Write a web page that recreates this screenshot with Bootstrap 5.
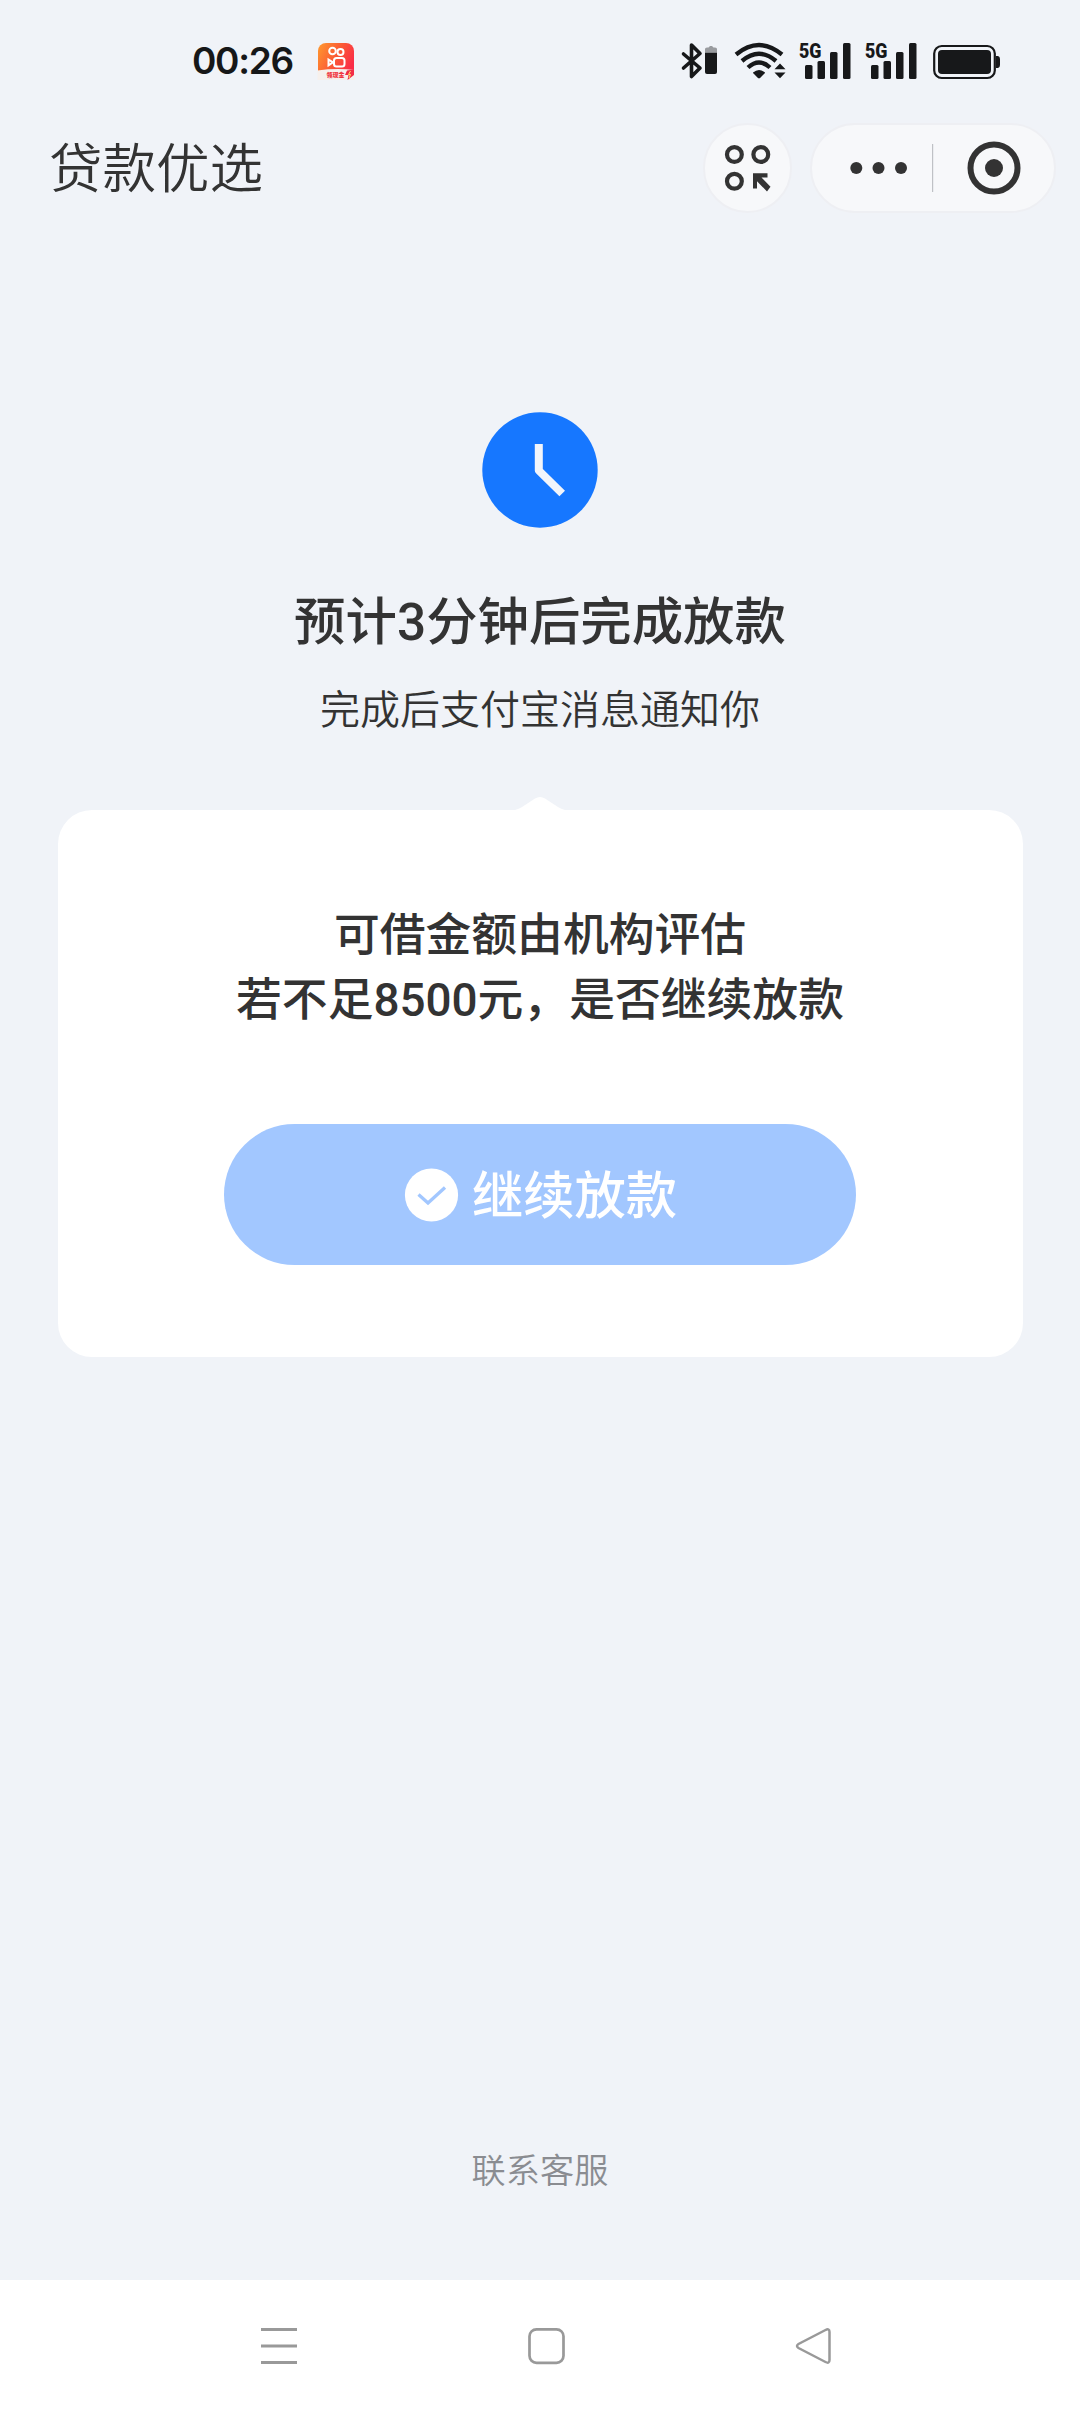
<!DOCTYPE html>
<html lang="zh-CN">
<head>
<meta charset="utf-8">
<meta name="viewport" content="width=device-width, initial-scale=1">
<title>贷款优选</title>
<link rel="stylesheet" href="https://cdn.jsdelivr.net/npm/bootstrap@5.3.0/dist/css/bootstrap.min.css">
<style>
body{background:#f0f3f8;color:#333;font-family:"Noto Sans CJK SC",sans-serif}
.screen{height:2412px;width:1080px;overflow:hidden}
svg{display:block;flex:none;overflow:visible}
.statusbar{height:123px;padding:42px 78px 0 192px}
.clock-time{font:600 37px/38px Inter,sans-serif;color:#161718;width:125px;letter-spacing:-1.3px}
.topbar{height:90px;padding:0 24px 0 49px}
.topbar h1{font-size:53.5px;line-height:80px;font-weight:350;margin:0;padding-bottom:6px}
.pill{background:#f7f8fa;border:2px solid #eeeff3;height:90px}
.pill-scan{width:89px;margin-right:18px}
.pill-menu{width:246px}
.pill-menu svg{margin-left:1px}
.num{font-family:Roboto,sans-serif;line-height:1}
.hero{padding-top:199px}
.hero h2{font-size:51.4px;line-height:70px;font-weight:500;margin:55px 0 0}
.hero p{font-size:40px;line-height:56px;font-weight:350;margin:26px 0 0}
.panel{width:965px;height:547px;border-radius:34px;padding-top:89px}
.panel p{font-size:45.8px;line-height:65px;font-weight:500;margin:0}
.go{width:632px;height:141px;margin-top:95px;background:#a2c7ff;color:#fff;font-size:51.3px;font-weight:500;line-height:70px;gap:14px;padding:0 0 0 1px}
.go span{padding-bottom:5px}
.support{font-size:34.2px;line-height:48px;font-weight:350;color:#8a8c91;margin-bottom:88px}
.softkeys{height:132px;padding:0 248px 0 260px}
.tip{margin-top:61px}
</style>
<script src="https://cdn.jsdelivr.net/npm/bootstrap@5.3.0/dist/js/bootstrap.bundle.min.js"></script>
</head>
<body>
<div class="screen d-flex flex-column">
  <header>
    <div class="statusbar d-flex align-items-start">
      <div class="clock-time">00:26</div>
      <svg width="38" height="38" viewBox="317 43 38 38">
        <defs><linearGradient id="kw" x1="0" y1="0" x2="1" y2=".5"><stop offset="0" stop-color="#ff9a2e"/><stop offset=".55" stop-color="#fb5a35"/><stop offset="1" stop-color="#fa2c48"/></linearGradient></defs>
        <rect x="318" y="44" width="36" height="36" rx="8" fill="url(#kw)"/>
        <path d="M317.500 71.500Q336 69 354.500 71V81H317.500Z" fill="#f6f0ec"/>
        <g fill="none" stroke="#fff" stroke-width="2"><circle cx="332.500" cy="52" r="3.300"/><circle cx="340.500" cy="53" r="3"/><rect x="334" y="59" width="10.500" height="8.500" rx="2.500"/><path d="M328.500 60.500L333 63.300L328.500 66.300Z"/></g>
        <text x="326.500" y="78" font-size="6" font-weight="900" fill="#f0323c" font-family="Noto Sans CJK SC">领现金</text>
        <path d="M347 71.500L354 70.500V76L347.500 81L348.500 76H345Z" fill="#f22c45"/><path d="M350.500 72L348.500 75.500H350.500L349 79" stroke="#ffe36a" fill="none"/>
      </svg>
      <svg class="ms-auto" width="322" height="38" viewBox="680 42 322 38" fill="#17181a">
        <path d="M683.500 54L700 68L691.500 76.500V45L700 53.500L683.500 68" fill="none" stroke="#17181a" stroke-width="3.600" stroke-linejoin="round" stroke-linecap="round"/>
        <path d="M705 52.500H717V72Q717 74 715 74H707Q705 74 705 72Z"/><path d="M705 52V49Q705 47.500 707 47.500H708.500L710 46H712L713.500 47.500H715Q717 47.500 717 49V52Z" fill="#999b9f"/>
        <g fill="none" stroke="#17181a" stroke-width="4.300"><path d="M736 54.500Q759 35.500 782 54.500"/><path d="M742 61Q759 46.500 776 61"/><path d="M748 67.500Q759 57.500 770 67.500"/></g>
        <path d="M753 72.500Q759 67.500 765 72.500V73L759.800 78.300H758.200L753 73Z"/>
        <path d="M774.500 69.300L780 63.500L785.500 69.300ZM774.500 72.500L780 78.300L785.500 72.500Z"/>
        <g><text x="799" y="57.500" font-family="Roboto" font-weight="900" font-size="21" textLength="22.500" lengthAdjust="spacingAndGlyphs">5G</text>
        <rect x="805" y="65" width="7.500" height="14" rx="1.500"/><rect x="817.500" y="61" width="7.500" height="18" rx="1.500"/><rect x="830" y="52" width="7.500" height="27" rx="1.500"/><rect x="843" y="43" width="7.500" height="36" rx="1.500"/></g>
        <g><text x="865" y="57.500" font-family="Roboto" font-weight="900" font-size="21" textLength="22.500" lengthAdjust="spacingAndGlyphs">5G</text>
        <rect x="871" y="65" width="7.500" height="14" rx="1.500"/><rect x="883.500" y="61" width="7.500" height="18" rx="1.500"/><rect x="896" y="52" width="7.500" height="27" rx="1.500"/><rect x="909" y="43" width="7.500" height="36" rx="1.500"/></g>
        <rect x="934.200" y="46" width="60.600" height="32" rx="7.500" fill="none" stroke="#17181a" stroke-width="2.200"/><rect x="938" y="50" width="53" height="24" rx="4"/><path d="M996 56H998Q1000 56.500 1000 59V65Q1000 67.500 998 68H996Z"/>
      </svg>
    </div>
    <nav class="topbar d-flex align-items-center">
      <h1 class="me-auto">贷款优选</h1>
      <div class="pill pill-scan rounded-pill d-flex align-items-center justify-content-center">
        <svg width="48" height="48" viewBox="724 144 48 48"><g fill="none" stroke="#333" stroke-width="4.200"><circle cx="734.400" cy="154.500" r="7.400"/><circle cx="760.800" cy="154.500" r="7.400"/><circle cx="734.400" cy="181.300" r="7.400"/></g><path d="M753 173.300H767.500V177.500H761.500L770.500 186.800L767 191.500L757 181.200V188.500H753Z" fill="#333"/></svg>
      </div>
      <div class="pill pill-menu rounded-pill d-flex align-items-center">
        <svg width="242" height="60" viewBox="813 138 242 60"><g fill="#333"><circle cx="856.300" cy="168" r="6"/><circle cx="878.500" cy="168" r="6"/><circle cx="901" cy="168" r="6"/><circle cx="994" cy="168" r="9"/></g><rect x="932" y="144" width="1.200" height="48" fill="#bfc1c5"/><circle cx="994" cy="168" r="23.500" fill="none" stroke="#333" stroke-width="6"/></svg>
      </div>
    </nav>
  </header>
  <main class="flex-grow-1 d-flex flex-column align-items-center text-center">
    <section class="hero d-flex flex-column align-items-center">
      <svg width="116" height="116" viewBox="0 0 116 116"><circle cx="58" cy="58" r="57.700" fill="#1677ff"/><path d="M56.800 32V58.500L80.200 81.500" fill="none" stroke="#f2f5fb" stroke-width="8" stroke-linejoin="round"/></svg>
      <h2>预计<span class="num">3</span>分钟后完成放款</h2>
      <p>完成后支付宝消息通知你</p>
    </section>
    <svg class="tip" width="50" height="14" viewBox="0 0 50 14"><path d="M0 14Q4 13 7 11L20 2.500Q25 -.5 30 2.500L43 11Q46 13 50 14Z" fill="#fff"/></svg>
    <section class="panel bg-white d-flex flex-column align-items-center">
      <p>可借金额由机构评估<br>若不足<span class="num">8500</span>元，是否继续放款</p>
      <button type="button" class="go btn border-0 rounded-pill d-flex align-items-center justify-content-center">
        <svg width="54" height="54" viewBox="0 0 54 54"><circle cx="27.500" cy="27" r="26.600" fill="#fff"/><path d="M14.500 26.500L24 35L41 19.500" fill="none" stroke="#a2c7ff" stroke-width="3.300"/></svg>
        <span>继续放款</span>
      </button>
    </section>
    <div class="support mt-auto">联系客服</div>
  </main>
  <footer class="softkeys bg-white d-flex justify-content-between align-items-center">
    <svg width="38" height="38" viewBox="0 0 38 38" stroke="#999" stroke-width="3"><path d="M1 2.500H37M1 19H37M1 35.500H37"/></svg>
    <svg width="38" height="38" viewBox="0 0 38 38" fill="none" stroke="#999" stroke-width="2.700"><rect x="2.500" y="2.300" width="34" height="33.500" rx="7"/></svg>
    <svg width="38" height="38" viewBox="0 0 38 38" fill="none" stroke="#999" stroke-width="2.500"><path d="M31.500 3Q35.500 1 35.500 5V33Q35.500 37 31.500 35L4.500 21Q1.500 19 4.500 17Z"/></svg>
  </footer>
</div>
</body>
</html>
